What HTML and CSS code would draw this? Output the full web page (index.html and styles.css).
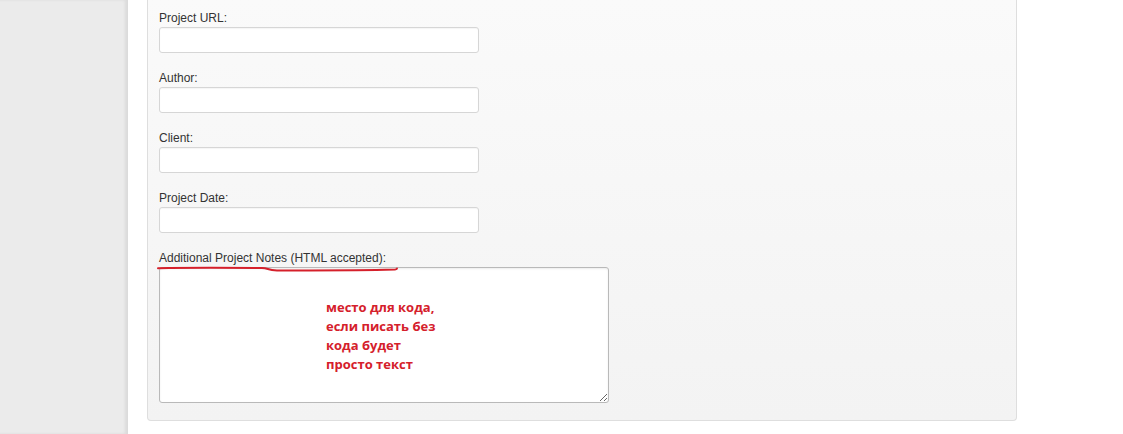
FILE: index.html
```html
<!DOCTYPE html>
<html>
<head>
<meta charset="utf-8">
<link rel="stylesheet" href="styles.css">
</head>
<body>
<div class="page">
  <aside class="sidebar"></aside>
  <main class="main">
    <div class="panel">
      <div class="field">
        <label class="label">Project URL:</label>
        <input class="input" type="text">
      </div>
      <div class="field">
        <label class="label">Author:</label>
        <input class="input" type="text">
      </div>
      <div class="field">
        <label class="label">Client:</label>
        <input class="input" type="text">
      </div>
      <div class="field">
        <label class="label">Project Date:</label>
        <input class="input" type="text">
      </div>
      <div class="field notes">
        <label class="label">Additional Project Notes (HTML accepted):</label>
        <textarea class="textarea"></textarea>
        <svg class="underline" width="250" height="8" viewBox="0 0 250 8">
          <path d="M1 2.2 C 30 1.6, 80 1.8, 105 2 C 112 2.2, 110 4.3, 120 4.4 C 160 4.6, 210 4.3, 238 3.6 C 240 3.4, 240 3, 240 2.6" fill="none" stroke="#d5202b" stroke-width="2" stroke-linecap="round"/>
        </svg>
        <div class="annotation">место для кода,<br>если писать без<br>кода будет<br>просто текст</div>
      </div>
    </div>
  </main>
</div>
</body>
</html>
```
FILE: styles.css
```css
html, body {
  margin: 0;
  padding: 0;
  background: #ffffff;
}
.page {
  display: flex;
  height: 434px;
  overflow: hidden;
}
.sidebar {
  width: 128px;
  flex: 0 0 128px;
  background: #ebebeb;
  box-shadow: inset -3px 0 3px rgba(0, 0, 0, 0.07);
}
.main {
  flex: 1;
  padding-left: 19px;
}
.panel {
  width: 857px;
  padding: 11px 0 17px 11px;
  border: 1px solid #dedede;
  border-top: none;
  border-radius: 0 0 4px 4px;
  background: linear-gradient(#fafafa, #f3f3f3);
  display: flex;
  flex-direction: column;
  gap: 18px;
}
.field {
  display: flex;
  flex-direction: column;
  align-items: flex-start;
}
.notes {
  position: relative;
}
.label {
  font-family: "Liberation Sans", Arial, sans-serif;
  font-size: 12px;
  line-height: 15px;
  color: #333333;
  margin-bottom: 1px;
}
.input {
  box-sizing: border-box;
  width: 320px;
  height: 26px;
  margin: 0;
  border: 1px solid #d6d6d6;
  border-radius: 3px;
  background: #ffffff;
  box-shadow: inset 0 1px 1px rgba(0, 0, 0, 0.04);
  outline: none;
}
.textarea {
  box-sizing: border-box;
  width: 450px;
  height: 136px;
  margin: 0;
  border: 1px solid #b9b9b9;
  border-radius: 3px;
  background: #ffffff;
  box-shadow: inset 0 1px 2px rgba(0, 0, 0, 0.08);
  resize: both;
  outline: none;
}
.underline {
  position: absolute;
  left: -2px;
  top: 15px;
}
.annotation {
  position: absolute;
  left: 167px;
  top: 47px;
  font-family: "Open Sans", "DejaVu Sans", sans-serif;
  font-weight: 700;
  font-size: 13px;
  line-height: 19px;
  color: #d5202b;
}
```
